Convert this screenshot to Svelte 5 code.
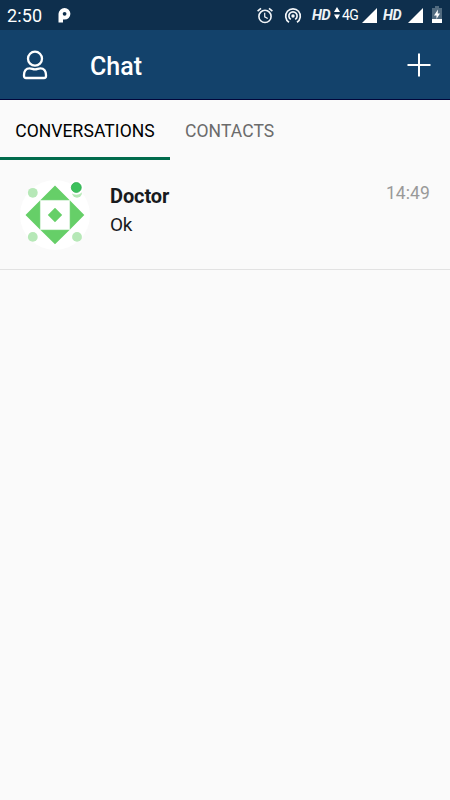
<script>
  let active = $state(0);
  const tabs = ['CONVERSATIONS', 'CONTACTS'];
  const chats = [{ name: 'Doctor', message: 'Ok', time: '14:49' }];
</script>

<main class="screen">
  <div class="status">
    <span class="clock">2:50</span>
    <svg class="parking" width="14" height="17" viewBox="0 0 14 17"><path d="M.5 6.8A6 6 0 0 1 6.6 1a5.8 5.8 0 0 1 0 11.6H5v3H.5zM6.6 4.9a1.9 1.9 0 1 0 0 3.8 1.9 1.9 0 0 0 0-3.8z" fill="#fff" fill-rule="evenodd"/></svg>
    <svg class="alarm" width="16" height="17" viewBox="0 0 16 17" fill="none" stroke="#f3f6f9" stroke-width="1.6"><circle cx="8" cy="9.4" r="6.1"/><path d="M.6 4.2 4 1.3M15.4 4.2 12 1.3"/><path d="M7.7 5.8v4l3 1.8" stroke-width="1.2"/></svg>
    <svg class="hotspot" width="18" height="17" viewBox="0 0 18 17" fill="none" stroke="#f3f6f9" stroke-width="1.7"><path d="M5 15.2A7.3 7.3 0 1 1 13 15.2"/><path d="M6.8 12.4A4.1 4.1 0 1 1 11.2 12.4"/><circle cx="9" cy="9" r="1.7" fill="#f3f6f9" stroke="none"/></svg>
    <span class="hd first">HD</span>
    <svg class="data" width="6" height="13" viewBox="0 0 6 13" fill="#fff"><path d="M3 0 6 5H0zM0 7.5h6L3 12.5z"/></svg>
    <span class="network">4G</span>
    <svg class="signal" width="15" height="15" viewBox="0 0 15 15"><path d="M15 0v15H0z" fill="#fff"/></svg>
    <span class="hd second">HD</span>
    <svg class="signal two" width="15" height="15" viewBox="0 0 15 15"><path d="M15 0v15H0z" fill="#fff"/></svg>
    <svg class="battery" width="10" height="17" viewBox="0 0 10 17"><path d="M3 0h4v2h3v15H0V2h3z" fill="#526b80"/><path d="M0 13h10v4H0z" fill="#fff"/><path d="M6 3.5 2 9.6h2.5V13L8 7.5H5.7z" fill="#fff"/></svg>
  </div>

  <header>
    <svg class="person" width="26" height="30" viewBox="0 0 26 30" fill="none" stroke="#fff" stroke-width="2.3"><circle cx="13" cy="8.7" r="7"/><path d="M7.6 18.3c2.2 0 3.2 1 5.4 1s3.2-1 5.4-1c3.7 0 5.6 3.1 5.6 6.8v.9c0 1.3-.7 2-2 2H4c-1.3 0-2-.7-2-2v-.9c0-3.7 1.9-6.8 5.6-6.8z"/></svg>
    <h1>Chat</h1>
    <svg class="plus" width="24" height="24" viewBox="0 0 24 24"><path d="M.5 12h23M12 .5v23" stroke="#fff" stroke-width="2"/></svg>
  </header>

  <nav>
    {#each tabs as tab, i}
      <button class:active={active === i} onclick={() => (active = i)}>{tab}</button>
    {/each}
  </nav>

  {#each chats as chat}
    <article>
      <svg class="avatar" width="70" height="70" viewBox="0 0 70 70">
        <circle cx="35" cy="35" r="35" fill="#fff"/>
        <g fill="#b6e8b7"><circle cx="12.8" cy="12.8" r="4.9"/><circle cx="57" cy="12.8" r="4.9"/><circle cx="12.8" cy="56.9" r="4.9"/><circle cx="57" cy="56.9" r="4.9"/></g>
        <path d="M35 5.4 49.5 20h-29zM20 20.5v29L5.5 35zM50 20.5 64.3 35 50 49.5zM20.5 50h29L35 64.2zM35 27.7 42.2 35 35 42.2 27.8 35z" fill="#66cf68"/>
        <path d="M20.4 20.4h29.2v29.2H20.4z" fill="none" stroke="#c4edc5" stroke-width=".7"/>
        <circle cx="56.3" cy="7.5" r="7.3" fill="#fff"/>
        <circle cx="56.3" cy="7.5" r="5" fill="#3cc15c" stroke="#26ab49" stroke-width=".7"/>
      </svg>
      <div class="copy"><strong>{chat.name}</strong><p>{chat.message}</p></div>
      <time>{chat.time}</time>
    </article>
  {/each}
</main>

<style>
  :global(body) { margin: 0; background: #fafafa; }
  .screen { width: 450px; height: 800px; overflow: hidden; background: #fafafa; font-family: Roboto, sans-serif; }
  svg { display: block; flex: none; }
  .status { height: 30px; display: flex; align-items: flex-start; background: #0e2f4d; color: #fff; white-space: nowrap; }
  .status span { display: block; flex: none; box-sizing: border-box; line-height: 20px; }
  .clock { width: 57px; padding: 6px 0 0 7px; font-size: 18px; font-weight: 400; letter-spacing: .1px; }
  .parking { margin: 7px 0 0 1px; }
  .alarm { margin: 7px 0 0 185px; }
  .hotspot { margin: 7px 0 0 11px; }
  .hd { width: 19px; padding-top: 6px; font-size: 14.5px; font-weight: 700; font-style: italic; letter-spacing: -.4px; color: #edf2f6; }
  .hd.first { margin-left: 10px; }
  .data { margin: 7px 0 0 3px; }
  .network { width: 18px; margin-left: 2px; padding-top: 5px; font-size: 14px; letter-spacing: -.5px; }
  .signal { margin: 8px 0 0 2px; }
  .hd.second { margin-left: 6px; }
  .signal.two { margin-left: 6px; }
  .battery { margin: 6px 0 0 9px; }
  header { box-sizing: border-box; height: 70px; display: flex; align-items: flex-start; background: #13426b; border-bottom: 1px solid #01063b; color: #fff; }
  .person { margin: 20px 0 0 22px; }
  h1 { margin: 22px 0 0 42px; font-size: 25px; line-height: 30px; font-weight: 500; letter-spacing: 0; }
  .plus { margin: 23px 19px 0 auto; }
  nav { height: 60px; display: flex; }
  button { box-sizing: border-box; height: 60px; margin: 0; padding: 4px 15px 0; border: 0; border-bottom: 3px solid transparent; background: none; font: 400 17.5px/20px Roboto, sans-serif; letter-spacing: .08px; color: #6b6b6b; white-space: nowrap; }
  button.active { width: 170px; padding-right: 14px; padding-left: 14px; border-color: #006b4c; color: #000; }
  article { box-sizing: border-box; height: 110px; display: flex; align-items: flex-start; padding: 20px 20px 0; border-bottom: 1px solid #e2e2e2; }
  .copy { margin-left: 20px; padding-top: 4px; color: #181b1e; }
  strong { display: block; font-size: 20px; line-height: 24px; font-weight: 700; letter-spacing: -.1px; }
  p { margin: 5px 0 0; font-size: 19px; line-height: 24px; letter-spacing: -.3px; }
  time { margin: 1px 0 0 auto; font-size: 17.5px; line-height: 24px; letter-spacing: .1px; color: #999; }
</style>
